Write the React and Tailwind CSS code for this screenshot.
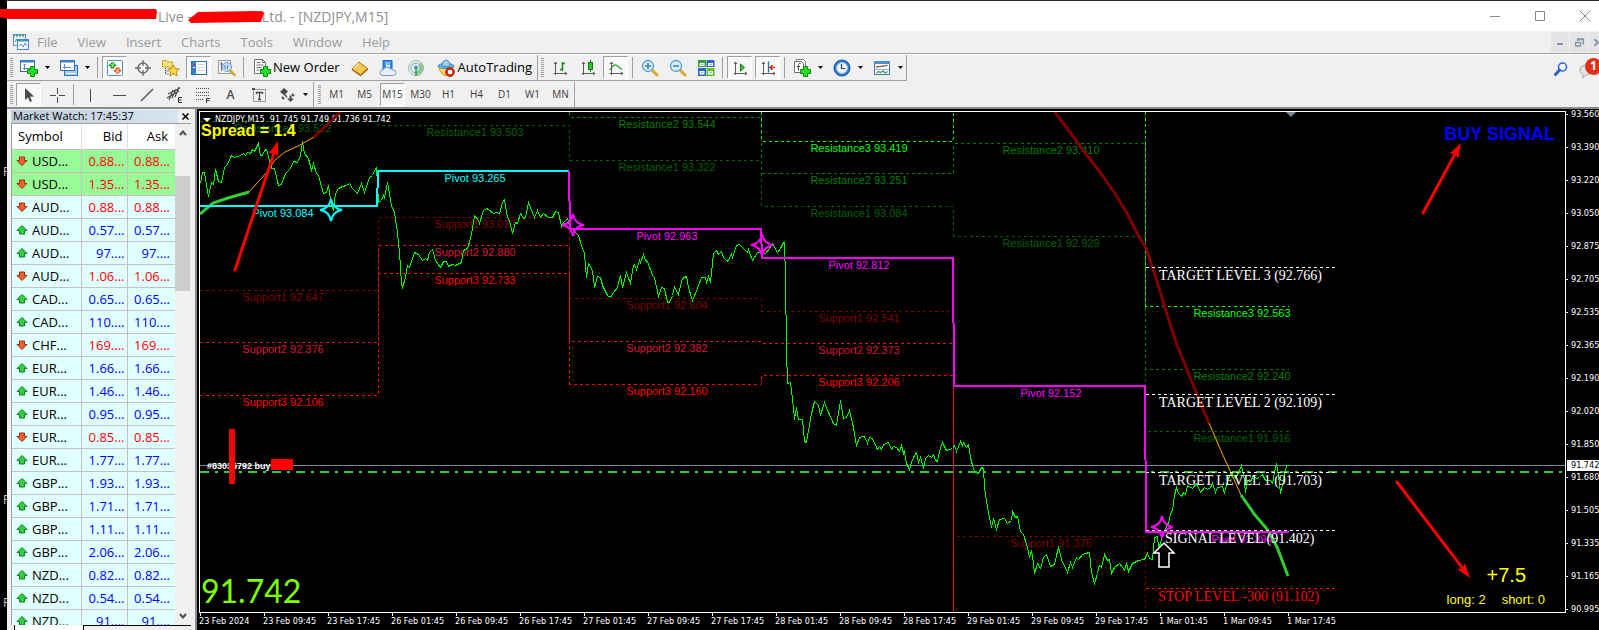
import React from 'react';
import clsx from 'clsx';

const MENUS = ['File', 'View', 'Insert', 'Charts', 'Tools', 'Window', 'Help'];
const PERIODS = ['M1', 'M5', 'M15', 'M30', 'H1', 'H4', 'D1', 'W1', 'MN'];

const QUOTES = [
  { symbol: 'USD...', price: '0.88...', up: false, hot: true },
  { symbol: 'USD...', price: '1.35...', up: false, hot: true },
  { symbol: 'AUD...', price: '0.88...', up: false },
  { symbol: 'AUD...', price: '0.57...', up: true },
  { symbol: 'AUD...', price: '97....', up: true },
  { symbol: 'AUD...', price: '1.06...', up: false },
  { symbol: 'CAD...', price: '0.65...', up: true },
  { symbol: 'CAD...', price: '110....', up: true },
  { symbol: 'CHF...', price: '169....', up: false },
  { symbol: 'EUR...', price: '1.66...', up: true },
  { symbol: 'EUR...', price: '1.46...', up: true },
  { symbol: 'EUR...', price: '0.95...', up: true },
  { symbol: 'EUR...', price: '0.85...', up: false },
  { symbol: 'EUR...', price: '1.77...', up: true },
  { symbol: 'GBP...', price: '1.93...', up: true },
  { symbol: 'GBP...', price: '1.71...', up: true },
  { symbol: 'GBP...', price: '1.11...', up: true },
  { symbol: 'GBP...', price: '2.06...', up: true },
  { symbol: 'NZD...', price: '0.82...', up: true },
  { symbol: 'NZD...', price: '0.54...', up: true },
  { symbol: 'NZD...', price: '91....', up: true },
];

const PRICES = [
  '93.560', '93.390', '93.220', '93.050', '92.875', '92.705', '92.535', '92.365',
  '92.190', '92.020', '91.850', '91.680', '91.505', '91.335', '91.165', '90.995',
];

const TIMES = [
  '23 Feb 2024', '23 Feb 09:45', '23 Feb 17:45', '26 Feb 01:45', '26 Feb 09:45', '26 Feb 17:45',
  '27 Feb 01:45', '27 Feb 09:45', '27 Feb 17:45', '28 Feb 01:45', '28 Feb 09:45', '28 Feb 17:45',
  '29 Feb 01:45', '29 Feb 09:45', '29 Feb 17:45', '1 Mar 01:45', '1 Mar 09:45', '1 Mar 17:45',
];

// One entry per trading day. Some levels run outside the visible price range.
const SESSIONS = [
  { x0: 0, x1: 177, mid: 83, R3: 94.4, R2: 93.8, R1: 93.522, P: 93.084, S1: 92.647, S2: 92.376, S3: 92.106 },
  { x0: 178, x1: 368, mid: 275, R3: 94.2, R2: 93.65, R1: 93.503, P: 93.265, S1: 93.027, S2: 92.88, S3: 92.733 },
  { x0: 370, x1: 560, mid: 467, R3: 93.9, R2: 93.544, R1: 93.322, P: 92.963, S1: 92.604, S2: 92.382, S3: 92.16 },
  { x0: 562, x1: 752, mid: 659, R3: 93.419, R2: 93.251, R1: 93.084, P: 92.812, S1: 92.541, S2: 92.373, S3: 92.206 },
  { x0: 754, x1: 944, mid: 851, R3: 94.2, R2: 93.41, R1: 92.929, P: 92.152, S1: 91.375, S2: 90.8, S3: 90.6 },
  { x0: 946, x1: 1088, mid: 1042, R3: 92.563, R2: 92.24, R1: 91.916, P: 91.394, S1: 90.9, S2: 90.6, S3: 90.4 },
];

const LEVELS = [
  { key: 'R1', name: 'Resistance1', color: '#006400' },
  { key: 'R2', name: 'Resistance2', color: '#008000' },
  { key: 'R3', name: 'Resistance3', color: '#00ff00' },
  { key: 'S1', name: 'Support1', color: '#800000' },
  { key: 'S2', name: 'Support2', color: '#dc143c' },
  { key: 'S3', name: 'Support3', color: '#ff0000' },
];

const TARGETS = [
  { text: 'TARGET LEVEL 3 (92.766)', x: 959, y: 155, color: '#ffffff' },
  { text: 'TARGET LEVEL 2 (92.109)', x: 959, y: 282, color: '#ffffff' },
  { text: 'TARGET LEVEL 1 (91.703)', x: 959, y: 360, color: '#ffffff' },
  { text: 'SIGNAL LEVEL (91.402)', x: 965, y: 418, color: '#ffffff' },
  { text: 'STOP LEVEL -300 (91.102)', x: 958, y: 476, color: '#ff0000' },
];

const CLOSE_LINE = `
0,71 2,60 4,60 8,84 11,70 13,72 15,57 18,69 21,70 24,55 27,52 31,43 34,45 40,43 43,41 45,43 47,40 50,41
52,37 54,39 58,31 60,43 62,43 64,38 66,37 69,48 71,56 74,56 78,73 81,72 85,61 90,56 93,49 97,50 100,43
102,29 104,41 108,46 111,58 113,51 116,61 118,63 123,81 126,80 128,73 131,93 133,97 135,81 138,76 142,74
146,73 149,71 152,76 157,81 161,71 164,80 167,71 169,65 172,63 174,58 176,55 178,90 181,88 183,83 184,85
187,70 188,75 191,93 194,100 197,120 199,140 201,171 202,175 205,165 207,153 209,155 212,146 214,140
218,142 222,148 225,146 227,148 229,140 232,137 235,148 240,155 243,149 246,149 248,154 252,152 255,153
261,150 263,138 267,136 270,126 272,116 274,103 278,108 279,111 283,98 286,96 288,97 293,101 296,100
299,101 302,90 304,87 307,105 309,108 312,121 315,110 317,111 320,101 323,106 325,105 328,90 332,100
334,105 337,98 340,105 343,101 348,105 352,105 355,99 358,100 361,114 363,110 367,106 370,116 373,118
378,123 382,136 384,141 386,165 388,151 392,158 394,175 397,164 400,165 402,173 407,183 410,185 413,180
417,175 420,163 422,175 426,160 430,171 433,153 434,152 436,157 439,148 440,150 443,142 445,148 447,149
452,163 454,165 458,184 461,175 464,176 467,190 469,190 472,183 474,175 478,182 482,166 486,164 488,175
492,188 497,176 501,165 505,165 506,170 508,164 510,170 513,141 516,138 518,142 521,139 523,145 527,149
531,142 532,145 536,133 539,132 543,136 547,140 548,137 552,148 557,140 562,140 565,141 569,136 572,131
577,140 580,136 583,130 584,130 585,166 586,236 587,271 590,270 592,286 594,307 596,295 598,307 602,307
604,329 606,330 608,318 611,301 614,289 618,293 620,303 624,290 628,300 633,311 636,313 638,301 640,288
643,306 646,305 649,298 653,315 656,333 659,325 662,324 664,324 667,331 669,325 672,326 677,337 679,334
681,337 683,332 688,330 691,337 693,334 696,335 699,339 701,333 703,341 704,339 706,351 709,357 711,350
713,345 716,340 718,350 720,345 723,356 725,346 728,343 731,345 733,342 735,348 737,349 740,335 742,330
746,338 752,336 754,333 756,339 760,329 762,333 763,330 766,335 768,332 770,345 772,353 774,359 778,361
781,355 783,356 784,375 787,395 791,415 793,406 796,417 799,407 804,406 807,411 811,408 812,399 815,405
817,404 820,419 823,422 827,435 829,445 831,438 833,451 834,461 837,451 840,456 843,445 846,442 850,454
854,452 856,443 858,435 862,450 865,455 867,460 870,450 872,455 876,445 878,447 882,442 885,441 889,440
891,460 894,471 897,461 899,453 901,455 904,442 907,448 909,447 911,461 914,455 919,451 922,455 924,458
926,451 928,459 932,451 938,448 944,447 947,441 949,446 952,447 954,425 957,424 958,435 960,431 962,421
965,420 966,411 968,411 970,401 972,398 974,383 976,375 978,381 981,384 983,380 985,382 987,373 992,376
996,371 1000,380 1004,375 1007,377 1010,375 1012,371 1015,380 1017,375 1022,374 1024,381 1027,368
1031,360 1035,366 1038,360 1041,353 1043,361 1045,380 1047,368 1050,369 1053,363 1056,366 1059,365
1062,362 1065,368 1070,368 1072,371 1074,360 1076,351 1078,363 1080,381 1083,368 1086,353 1088,353`;

const TREND = [
  { color: '#32cd32', w: 3, pts: '0,102 13,91 28,86 49,80' },
  { color: '#ffa500', w: 1, pts: '49,80 67,60 75,48 85,40 98,34 114,25' },
  { color: '#800000', w: 3, pts: '854,-1 867,16 883,38 902,63 914,80 927,101 938,123 946,136 955,163 965,196 977,233 988,260 1000,290 1009,311' },
  { color: '#ffa500', w: 1, pts: '1009,311 1022,341 1041,383' },
  { color: '#32cd32', w: 3, pts: '1041,383 1055,403 1067,417 1077,435 1088,464' },
];

const priceY = (p) => Math.round(93.7 + (93.084 - p) * 193.1);

/* ---------- icons ---------- */

function Svg({ size = 18, children }) {
  return (
    <svg width={size} height={size} viewBox="0 0 18 18" fill="none" aria-hidden="true" className="shrink-0">
      {children}
    </svg>
  );
}

const Plus = ({ x = 7, y = 7 }) => (
  <path
    transform={`translate(${x} ${y})`}
    d="M3.500.5h4v3h3v4h-3v3h-4v-3h-3v-4h3z"
    fill="#22e022"
    stroke="#0a8a0a"
  />
);

const Axes = () => (
  <path d="M4.500 3v13M2.500 14.500H16M3 5l1.500-2L6 5M14 13l2 1.500-2 1.500" stroke="#5c5c5c" />
);

const NewChartIcon = () => (
  <Svg>
    <rect x=".5" y="1.500" width="14" height="11" fill="#fff" stroke="#2f70b5" />
    <path d="M0 2.500h15" stroke="#3a80c8" strokeWidth="2" />
    <path d="M4.500 5v6M3 9.500h8M3.500 6l1-1 1 1" stroke="#5c86b5" />
    <Plus />
  </Svg>
);

const ProfilesIcon = () => (
  <Svg>
    <rect x="4.500" y="6.500" width="13" height="10" fill="#a9cdf0" stroke="#2f70b5" />
    <rect x=".5" y="1.500" width="14" height="10" fill="#fff" stroke="#2f70b5" />
    <path d="M0 2.500h15" stroke="#3a80c8" strokeWidth="2" />
    <path d="M4.500 5v5M3 8.500h8" stroke="#5c86b5" />
    <path d="M6 14.500h10" stroke="#e8f3ff" />
  </Svg>
);

const MarketWatchIcon = () => (
  <Svg>
    <rect x="1.500" y="1.500" width="15" height="15" rx="1" fill="#fff" stroke="#4a8fd0" />
    <path d="M6.500 3 10 6.500H8v2.500H5V6.500H3z" fill="#7be87b" stroke="#0a7d0a" />
    <path d="M11.500 15 15 11.500h-2V9h-3v2.500H8z" fill="#ffb090" stroke="#d8400c" />
  </Svg>
);

const DataWindowIcon = () => (
  <Svg>
    <circle cx="9" cy="9" r="5" stroke="#6b6b6b" strokeWidth="1.500" />
    <path d="M9 1v6M9 11v6M1 9h6M11 9h6" stroke="#6b6b6b" strokeWidth="1.300" />
  </Svg>
);

const FavoritesIcon = () => (
  <Svg>
    <path d="M.5 1.500h4l1 1.500h5v5H.5z" fill="#ffe27a" stroke="#c9a227" />
    <path d="M3.500 9v6h3M3.500 12h3" stroke="#333" strokeDasharray="1 1" />
    <path
      d="m11.500 6 1.800 3.600 4 .5-3 2.700.8 4-3.600-2-3.600 2 .8-4-3-2.700 4-.5z"
      fill="#ffd54a"
      stroke="#bd8a0c"
    />
  </Svg>
);

const NavigatorIcon = () => (
  <Svg>
    <rect x="1.500" y="2.500" width="15" height="13" fill="#fff" stroke="#2f6fb5" />
    <path d="M4 3v12" stroke="#3a7ecb" strokeWidth="4" />
    <path d="M8 5.500h6.500M8 8.500h6.500M8 11.500h6.500" stroke="#c9d5e6" />
    <path d="M3 5.500h2" stroke="#e02020" />
    <path d="M3 8.500h2" stroke="#fff" />
  </Svg>
);

const TesterIcon = () => (
  <Svg>
    <rect x=".5" y="1.500" width="12" height="13" fill="#f2f2f2" stroke="#9a9a9a" />
    <path d="M3.500 3v9M2 5h3M10 3v5" stroke="#707070" />
    <circle cx="9" cy="8" r="4.500" fill="#bfe0fb" fillOpacity=".8" stroke="#6a9fd0" />
    <path d="M7 6v4M9.500 6.500v4" stroke="#4f7ba8" />
    <path d="m12.500 11.500 4 4.500" stroke="#d8a11c" strokeWidth="2.500" strokeLinecap="round" />
  </Svg>
);

const NewOrderIcon = () => (
  <Svg>
    <path d="M1.500.5h8l3 3v11h-11z" fill="#fff" stroke="#707070" />
    <path d="M9.500.5v3h3M3.500 3.500h4M3.500 6h7M3.500 8.500h5M3.500 11h3" stroke="#707070" />
    <Plus />
  </Svg>
);

const BookIcon = () => (
  <Svg>
    <path d="M1 10 8 3l8.500 6.500L9.500 16z" fill="#f4c64a" stroke="#b5790c" />
    <path d="m1 10 8.500 6 7-6.500v1.500l-7 6-8.500-6z" fill="#c07a10" stroke="#9a5f08" strokeWidth=".6" />
    <path d="M3 9.500 8 4.500" stroke="#fff0b8" strokeWidth="1.500" />
  </Svg>
);

const CloudIcon = () => (
  <Svg>
    <path d="M4 1.500h9v9H4z" fill="#2f92ef" stroke="#1569bd" />
    <path d="M7 3.500h4v5H7z" fill="#d7ecff" />
    <path d="M8 5h3" stroke="#1569bd" />
    <path
      d="M4 16.500a3 3 0 0 1 .3-6 4 4 0 0 1 6.700-.8 3 3 0 0 1 3 1.400 2.700 2.700 0 0 1 .3 5.400z"
      fill="#eaf0f8"
      stroke="#7e95b5"
    />
  </Svg>
);

const SignalIcon = () => (
  <Svg>
    <circle cx="9" cy="9" r="7.500" fill="#e8f2ea" stroke="#9fb8b0" />
    <circle cx="9" cy="9" r="5" stroke="#7ba6c9" />
    <path d="M9 8v8.500a7.500 7.500 0 0 0 5-13z" fill="#58b558" fillOpacity=".5" />
    <circle cx="9" cy="8.500" r="2.500" fill="#4a90d9" stroke="#fff" />
    <path d="M9 9v8" stroke="#2e9a3a" strokeWidth="1.500" />
  </Svg>
);

const AutoTradingIcon = () => (
  <Svg>
    <path d="M2 8c1 5 4 8.500 7 8.500S15 13 16 8z" fill="#ffd85c" stroke="#c0901a" />
    <ellipse cx="9" cy="7" rx="8" ry="2.500" fill="#6ab8ea" stroke="#3c86bd" />
    <path d="M5 6.500c0-7 8-7 8 0-2 1.500-6 1.500-8 0z" fill="#9cd2f4" stroke="#3c86bd" />
    <circle cx="13" cy="13" r="4.500" fill="#e02a10" stroke="#a51400" strokeWidth=".7" />
    <rect x="11" y="11" width="4" height="4" fill="#fff" />
  </Svg>
);

const BarsIcon = () => (
  <Svg>
    <Axes />
    <path d="M11.500 3v9M9 10.500h2M12 4.500h2" stroke="#0c8f0c" strokeWidth="1.500" />
  </Svg>
);
const CandlesIcon = () => (
  <Svg>
    <Axes />
    <path d="M11.500 1v12" stroke="#0a6f0a" />
    <rect x="9.500" y="3.500" width="4" height="7" fill="#28c828" stroke="#0a7d0a" />
  </Svg>
);
const LineIcon = () => (
  <Svg>
    <Axes />
    <path d="M3 11c3-6 6-6 8-3.500l4 3" stroke="#2ea02e" strokeWidth="1.300" />
  </Svg>
);

const ZoomIcon = ({ plus }) => (
  <Svg>
    <path d="m11.500 11.500 4.500 4.500" stroke="#d8ac20" strokeWidth="3" strokeLinecap="round" />
    <circle cx="7" cy="7" r="5.500" fill="#d6efff" stroke="#5a9ad4" strokeWidth="1.300" />
    <path d={plus ? 'M4 7h6M7 4v6' : 'M4 7h6'} stroke="#3a80c0" strokeWidth="1.500" />
  </Svg>
);

const TileIcon = () => (
  <Svg>
    <rect x="1" y="1" width="8" height="7" fill="#2fa32f" />
    <rect x="9.500" y="1" width="8" height="7" fill="#2e62d0" />
    <rect x="1" y="9" width="8" height="8" fill="#2e62d0" />
    <rect x="9.500" y="9" width="8" height="8" fill="#58c41e" />
    <path d="M2.500 4h5v3h-5zM11 4h5v3h-5zM2.500 12h5v3.500h-5zM11 12h5v3.500h-5z" fill="#fff" />
    <path d="M3.500 5.500h3M12 5.500h3M3.500 13.500h3M12 13.500h3" stroke="#9db8e0" />
  </Svg>
);

const ScrollIcon = () => (
  <Svg>
    <Axes />
    <path d="M9.500 5v7l4-3.500z" fill="#3fcf3f" stroke="#0a7d0a" />
  </Svg>
);
const ShiftIcon = () => (
  <Svg>
    <Axes />
    <path d="M9.500 2.500v11" stroke="#1f6fae" strokeWidth="1.300" />
    <path d="M11 8.500h5M13.500 6 11 8.500l2.500 2.500" stroke="#c03a10" strokeWidth="1.500" />
  </Svg>
);

const IndicatorsIcon = () => (
  <Svg>
    <path d="M3.500.5h7l2 2v9h-9z" fill="#fff" stroke="#808080" />
    <path d="M1.500 2.500h7l2 2v9h-9z" fill="#fff" stroke="#707070" />
    <path d="M7.500 4.500c-2-1-2 1-2 3v4M4 7.500h3" stroke="#444" />
    <Plus />
  </Svg>
);

const ClockIcon = () => (
  <Svg>
    <circle cx="9" cy="9" r="8" fill="#2b7ad4" stroke="#15539c" />
    <circle cx="9" cy="9" r="5.500" fill="#eef7ff" stroke="#8dbcf0" />
    <path d="M8.500 5v4.500H12" stroke="#333" strokeWidth="1.200" />
  </Svg>
);

const TemplateIcon = () => (
  <Svg>
    <rect x="1.500" y="2.500" width="15" height="13" fill="#fff" stroke="#3a76b5" />
    <path d="M1 3.500h16" stroke="#4a90d9" strokeWidth="3" />
    <path d="M3 8.500c2-2 3 0 4.500-1s3 0 4-.500 2-1 3-.500" stroke="#a04028" strokeWidth="1.200" />
    <path d="M2 10.500h14" stroke="#8fb0d5" />
    <path d="m3.500 14 2-1.500 2 1 2.500-1.500 2.500 2 2-1.500" stroke="#2e9a3a" strokeWidth="1.200" />
  </Svg>
);

const CursorIcon = () => (
  <Svg>
    <path d="M5 2v12l3-2.500 2 4.500 2-1-2-4.300 4-.2z" fill="#4a4a4a" />
  </Svg>
);
const CrossIcon = () => (
  <Svg>
    <path d="M9.500 2v6M9.500 11v6M2 9.500h6M11 9.500h6" stroke="#4a4a4a" />
  </Svg>
);
const VLineIcon = () => (
  <Svg>
    <path d="M8.500 3v13" stroke="#4a4a4a" />
  </Svg>
);
const HLineIcon = () => (
  <Svg>
    <path d="M3 9.500h13" stroke="#4a4a4a" />
  </Svg>
);
const TrendIcon = () => (
  <Svg>
    <path d="M3 15 15 3" stroke="#4a4a4a" strokeWidth="1.200" />
  </Svg>
);
const ChannelIcon = () => (
  <Svg>
    <path d="M1 12 13 5M2 8l12-6M3 14 7 4M6 12l4-9M9 11l4-10" stroke="#4a4a4a" strokeWidth="1.200" />
    <path d="M16 11.500h-3.500v5H16M12.500 14h3" stroke="#333" />
  </Svg>
);
const FiboIcon = () => (
  <Svg>
    <path d="M2 2.500h14M2 6.500h14M2 9.500h14M2 13.500h8" stroke="#4a4a4a" strokeDasharray="1 1" />
    <path d="M16 12.500h-3.500V17M12.500 14.500h3" stroke="#333" />
  </Svg>
);
const LabelIcon = () => (
  <Svg>
    <rect x="3.500" y="3.500" width="12" height="12" stroke="#4a4a4a" strokeDasharray="1 1" />
    <path d="M6 6.500h7M9.500 6v7.500M6.500 6v2M12.500 6v2M8 13.500h3" stroke="#4a4a4a" strokeWidth="1.300" />
    <path d="M2 2h3v2H2z" fill="#4a4a4a" />
  </Svg>
);
const ArrowsIcon = () => (
  <Svg>
    <path d="M6 2l4 3.500L6.500 9 2 6z" fill="#4a4a4a" />
    <path d="m4 6 5 5" stroke="#4a4a4a" strokeWidth="1.500" />
    <path d="M9 12.500h7L12.500 16z" fill="#4a4a4a" />
    <path d="M12.500 9.500v4M4 11l2 2M14 8l2 2" stroke="#4a4a4a" strokeWidth="2" />
  </Svg>
);

const QuoteArrow = ({ up }) => (
  <svg width="12" height="12" viewBox="0 0 12 12" aria-hidden="true" className="shrink-0">
    <path
      d={up ? 'M6 1.500 11 6.500H8.500V10h-5V6.500H1z' : 'M6 10.500 1 5.500h2.500V2h5v3.500H11z'}
      fill={up ? '#2fd03f' : '#f4602c'}
      stroke={up ? '#127a1c' : '#9c2c0a'}
    />
  </svg>
);

/* ---------- toolbar parts ---------- */

function Tool({ label, pressed, children }) {
  return (
    <button
      type="button"
      aria-label={label}
      className={clsx(
        'flex h-[23px] w-[25px] shrink-0 items-center justify-center border',
        pressed ? 'border-t-[#a0a0a0] border-l-[#a0a0a0] border-r-white border-b-white bg-[#f8f8f8]' : 'border-transparent'
      )}
    >
      {children}
    </button>
  );
}

const Caret = ({ label }) => (
  <button type="button" aria-label={label} className="flex h-[23px] w-3 shrink-0 items-center justify-center">
    <svg width="5" height="3" viewBox="0 0 5 3" aria-hidden="true">
      <path d="M0 0h5L2.500 3z" fill="#000" />
    </svg>
  </button>
);

const Sep = () => <div className="mx-px h-[21px] w-px shrink-0 bg-[#a0a0a0]" />;

const Grip = () => (
  <div className="h-[20px] w-[3px] shrink-0 bg-[repeating-linear-gradient(to_bottom,#a0a0a0_0_1px,#f0f0f0_1px_2px)]" />
);

function Toolbars() {
  return (
    <div className="border-b-2 border-[#8a8a8a] bg-[#f0f0f0]">
      <div className="flex h-[27px]">
        <div className="flex h-[26px] items-center gap-[3px] border-r border-b border-[#a0a0a0] pl-[3px]">
          <Grip />
          <div className="flex">
            <Tool label="New chart"><NewChartIcon /></Tool>
            <Caret label="New chart list" />
          </div>
          <div className="flex">
            <Tool label="Profiles"><ProfilesIcon /></Tool>
            <Caret label="Profile list" />
          </div>
          <Sep />
          <Tool label="Market Watch" pressed><MarketWatchIcon /></Tool>
          <Tool label="Data Window"><DataWindowIcon /></Tool>
          <Tool label="Navigator"><FavoritesIcon /></Tool>
          <Tool label="Terminal" pressed><NavigatorIcon /></Tool>
          <Tool label="Strategy Tester"><TesterIcon /></Tool>
          <Sep />
          <button type="button" className="flex h-[23px] items-center gap-[2px] px-[5px] text-[13px] text-black">
            <NewOrderIcon />
            New Order
          </button>
          <Tool label="MetaEditor"><BookIcon /></Tool>
          <Tool label="Cloud"><CloudIcon /></Tool>
          <Tool label="Signals"><SignalIcon /></Tool>
          <button type="button" className="flex h-[23px] items-center gap-[3px] px-[5px] text-[13px] text-black">
            <AutoTradingIcon />
            AutoTrading
          </button>
        </div>
        <div className="flex h-[26px] items-center gap-[3px] border-r border-b border-[#a0a0a0] pl-[3px]">
          <Grip />
          <Tool label="Bar chart"><BarsIcon /></Tool>
          <Tool label="Candlesticks"><CandlesIcon /></Tool>
          <Tool label="Line chart" pressed><LineIcon /></Tool>
          <Sep />
          <Tool label="Zoom in"><ZoomIcon plus /></Tool>
          <Tool label="Zoom out"><ZoomIcon /></Tool>
          <Tool label="Tile windows"><TileIcon /></Tool>
          <Sep />
          <Tool label="Auto scroll" pressed><ScrollIcon /></Tool>
          <Tool label="Chart shift" pressed><ShiftIcon /></Tool>
          <Sep />
          <div className="flex">
            <Tool label="Indicators"><IndicatorsIcon /></Tool>
            <Caret label="Indicator list" />
          </div>
          <div className="flex">
            <Tool label="Periods"><ClockIcon /></Tool>
            <Caret label="Period list" />
          </div>
          <div className="flex">
            <Tool label="Templates"><TemplateIcon /></Tool>
            <Caret label="Template list" />
          </div>
        </div>
        <div className="ml-auto flex items-center gap-[11px]">
          <button type="button" aria-label="Search">
            <svg width="14" height="14" viewBox="0 0 14 14" fill="none" aria-hidden="true">
              <circle cx="8.500" cy="5" r="4" fill="#f4f8ff" stroke="#2c5fd0" strokeWidth="1.500" />
              <path d="M5.500 8 1.500 12.500" stroke="#2c5fd0" strokeWidth="3" strokeLinecap="round" />
            </svg>
          </button>
          <button type="button" aria-label="Notifications" className="relative h-[22px] w-[20px]">
            <svg width="16" height="16" viewBox="0 0 16 16" aria-hidden="true" className="mt-[6px]">
              <path d="M1 6a6 5 0 0 1 12 0c0 3-3 5-6 5l-3 3v-3.500C2 10 1 8 1 6z" fill="#e3e3ea" stroke="#a5a5a5" />
            </svg>
            <span className="absolute top-0 left-[6px] flex size-[17px] items-center justify-center rounded-full bg-[#e0301c] text-[12px] font-bold text-white">
              1
            </span>
          </button>
        </div>
      </div>
      <div className="flex h-[25px]">
        <div className="flex items-center gap-[3px] border-r border-[#a0a0a0] pr-[2px] pl-[3px]">
          <Grip />
          <Tool label="Cursor" pressed><CursorIcon /></Tool>
          <Tool label="Crosshair"><CrossIcon /></Tool>
          <Sep />
          <Tool label="Vertical line"><VLineIcon /></Tool>
          <Tool label="Horizontal line"><HLineIcon /></Tool>
          <Tool label="Trendline"><TrendIcon /></Tool>
          <Tool label="Channel"><ChannelIcon /></Tool>
          <Tool label="Fibonacci"><FiboIcon /></Tool>
          <Tool label="Text"><span className="text-[12px] font-semibold text-[#4a4a4a]">A</span></Tool>
          <Tool label="Text label"><LabelIcon /></Tool>
          <div className="flex">
            <Tool label="Arrows"><ArrowsIcon /></Tool>
            <Caret label="Arrow list" />
          </div>
        </div>
        <div className="flex items-center gap-[3px] border-r border-[#a0a0a0] pr-px pl-[4px]">
          <Grip />
          {PERIODS.map((p) => (
            <Tool key={p} label={p} pressed={p === 'M15'}>
              <span className="text-[10px] text-[#3c3c3c]">{p}</span>
            </Tool>
          ))}
        </div>
      </div>
    </div>
  );
}

/* ---------- market watch ---------- */

function MarketWatch() {
  return (
    <aside className="flex w-[190px] shrink-0 flex-col border-r-2 border-[#8a8a8a] bg-[#f0f0f0] pr-1 pl-1">
      <div className="flex h-[14px] items-center justify-between">
        <h2 className="h-[13px] w-[167px] bg-linear-to-r from-[#bfcddb] to-[#d7e4f2] pl-[2px] text-[11px] leading-[12px] text-black">
          Market Watch: 17:45:37
        </h2>
        <button type="button" aria-label="Close" className="mr-[2px]">
          <svg width="7" height="7" viewBox="0 0 7 7" aria-hidden="true">
            <path d="m.5.5 6 6m0-6-6 6" stroke="#000" strokeWidth="1.500" />
          </svg>
        </button>
      </div>
      <div className="flex min-h-0 flex-1 border-t border-l border-[#a0a0a0]">
        <div className="min-w-0 flex-1 overflow-hidden bg-white">
          <table className="w-full table-fixed border-collapse text-[13px] leading-[22px]">
            <thead>
              <tr className="h-[25px] border-b border-[#c8c0c0] bg-white">
                <th className="w-[69px] border-r border-[#e0e0e0] pl-[6px] text-left font-normal">Symbol</th>
                <th className="w-[46px] border-r border-[#e0e0e0] pr-1 text-right font-normal">Bid</th>
                <th className="pr-[7px] text-right font-normal">Ask</th>
              </tr>
            </thead>
            <tbody>
              {QUOTES.map((q, i) => (
                <tr key={i} className={clsx('h-[23px] border-b border-[#c8c0c0]', q.hot ? 'bg-[#98fb98]' : 'bg-[#e0ffff]')}>
                  <td className="border-r border-[#c8c0c0] p-0 pl-1">
                    <span className="flex items-center gap-1">
                      <QuoteArrow up={q.up} />
                      {q.symbol}
                    </span>
                  </td>
                  <td className={clsx('border-r border-[#c8c0c0] p-0 pr-[2px] text-right', q.up ? 'text-[#0000ff]' : 'text-[#ff0000]')}>
                    {q.price}
                  </td>
                  <td className={clsx('p-0 pr-[5px] text-right', q.up ? 'text-[#0000ff]' : 'text-[#ff0000]')}>{q.price}</td>
                </tr>
              ))}
            </tbody>
          </table>
        </div>
        <div className="flex w-[16px] shrink-0 flex-col items-center py-[6px]">
          <svg width="8" height="6" viewBox="0 0 8 6" fill="none" aria-hidden="true">
            <path d="m1 5 3-3.500L7 5" stroke="#505050" strokeWidth="2" />
          </svg>
          <div className="mt-10 mr-px h-[115px] w-[15px] bg-[#cdcdcd]" />
          <svg width="8" height="6" viewBox="0 0 8 6" fill="none" aria-hidden="true" className="mt-auto">
            <path d="m1 1 3 3.500L7 1" stroke="#505050" strokeWidth="2" />
          </svg>
        </div>
      </div>
      <div className="flex h-[5px]">
        <div className="ml-[3px] w-[70px] border-x border-black bg-white" />
        <div className="flex-1 border-t border-black" />
      </div>
    </aside>
  );
}

/* ---------- chart ---------- */

function Arrow({ x1, y1, x2, y2 }) {
  const len = Math.hypot(x2 - x1, y2 - y1);
  const ux = (x2 - x1) / len;
  const uy = (y2 - y1) / len;
  const bx = x2 - ux * 15;
  const by = y2 - uy * 15;
  const nx = x2 - ux * 12;
  const ny = y2 - uy * 12;
  return (
    <g>
      <line x1={x1} y1={y1} x2={nx} y2={ny} stroke="#ff0000" strokeWidth="3" strokeLinecap="round" />
      <polygon points={`${x2},${y2} ${bx - uy * 5},${by + ux * 5} ${nx},${ny} ${bx + uy * 5},${by - ux * 5}`} fill="#ff0000" />
    </g>
  );
}

const Star = ({ x, y, color }) => (
  <path
    transform={`translate(${x} ${y})`}
    d="M0-11Q1.500-1.500 11 0 1.500 1.500 0 11-1.500 1.500-11 0-1.500-1.500 0-11z"
    fill="none"
    stroke={color}
    strokeWidth="2"
  />
);

function stepPoints(key) {
  return SESSIONS.map(
    (s) => `${s.x0},${priceY(s[key]) + 0.5} ${s.x1 + 1},${priceY(s[key]) + 0.5}`
  ).join(' ');
}

function PriceChart() {
  return (
    <svg className="absolute inset-0 h-full w-full font-['Liberation_Sans']" role="img" aria-label="NZDJPY M15">
      <line x1="0" x2="100%" y1="353.5" y2="353.5" stroke="#778899" />
      <line x1="0" x2="100%" y1="360" y2="360" stroke="#32cd32" strokeWidth="2" strokeDasharray="9 6 3 6" />

      {/* support and resistance */}
      <g fill="none" strokeDasharray="3 3" shapeRendering="crispEdges">
        {LEVELS.map((l) => (
          <polyline key={l.key} points={stepPoints(l.key)} stroke={l.color} />
        ))}
      </g>
      <g fontSize="11" textAnchor="middle">
        {LEVELS.map((l) =>
          SESSIONS.filter((s) => priceY(s[l.key]) > 0 && priceY(s[l.key]) < 480).map((s) => (
            <text key={`${l.key}${s.x0}`} x={s.mid} y={priceY(s[l.key]) + 11} fill={l.color}>
              {`${l.name} ${s[l.key].toFixed(3)}`}
            </text>
          ))
        )}
        {SESSIONS.map((s, i) => (
          <text key={s.x0} x={s.mid} y={priceY(s.P) + 11} fill={i < 2 ? '#00ffff' : '#ff00ff'}>
            {`Pivot ${s.P.toFixed(3)}`}
          </text>
        ))}
      </g>

      <polyline points={CLOSE_LINE} transform="translate(.5 .5)" fill="none" stroke="#00ff00" shapeRendering="crispEdges" />
      {TREND.map((t) => (
        <polyline key={t.pts} points={t.pts} fill="none" stroke={t.color} strokeWidth={t.w} />
      ))}

      {/* pivot */}
      <g fill="none" strokeWidth="2" shapeRendering="crispEdges">
        <polyline points="0,94 177,94 178,59 369,59" stroke="#00ffff" />
        <polyline points="369,59 370,117 561,117 562,146 753,146 754,274 945,274 946,420 1089,420" stroke="#ff00ff" />
      </g>
      <Star x={131} y={98} color="#00ffff" />
      <Star x={373} y={113} color="#ff00ff" />
      <Star x={562} y={133} color="#ff00ff" />
      <Star x={962} y={415} color="#ff00ff" />

      {/* signal levels */}
      {TARGETS.map((t) => (
        <g key={t.text}>
          <line x1="946" x2="1135" y1={t.y + 0.5} y2={t.y + 0.5} stroke={t.color} strokeDasharray="3 3" />
          <text x={t.x} y={t.y + 13} fill={t.color} fontSize="14" className="font-['Liberation_Serif']">
            {t.text}
          </text>
        </g>
      ))}
      <path d="M964 431l10 10h-5v14h-10v-14h-5z" fill="#000" stroke="#fff" strokeWidth="1.500" />
      <path d="M1086 0h10l-5 5z" fill="#778899" />

      {/* chart title */}
      <path d="M3 6h8l-4 4z" fill="#fff" />
      <text x="15" y="10" fill="#fff" fontSize="9" className="font-['DejaVu_Sans_Condensed']">
        {'NZDJPY,M15\u00a0 91.745 91.749 91.736 91.742'}
      </text>
      <polyline points="114,25 128,12 141,-1" fill="none" stroke="#800000" strokeWidth="3" />
      <text x="1" y="24" fill="#ffff00" fontSize="16" fontWeight="bold">Spread = 1.4</text>

      <text x="7" y="357" fill="#fff" fontSize="9" fontWeight="bold">#83036792 buy</text>
      <rect x="29" y="317" width="6" height="55" rx="1" fill="#ff0000" />
      <rect x="71" y="347" width="22" height="11" rx="1" fill="#ff0000" />
      <text x="1" y="491" fill="#7fff00" fontSize="32" className="font-['Lato']">91.742</text>

      <Arrow x1={35} y1={158} x2={78} y2={29} />
      <Arrow x1={1223} y1={101} x2={1261} y2={31} />
      <Arrow x1={1197} y1={370} x2={1270} y2={466} />
    </svg>
  );
}

function ChartWindow() {
  return (
    <main className="flex min-w-0 flex-1 bg-black pl-[2px] font-['DejaVu_Sans_Condensed','DejaVu_Sans',sans-serif] text-[9px] leading-[11px] text-white">
      <div className="flex min-w-0 flex-1 flex-col pt-[2px]">
        <div className="relative min-h-0 flex-1 overflow-hidden border border-white">
          <PriceChart />
          <p className="absolute top-3 right-[10px] font-['Liberation_Sans'] text-[18px] leading-5 font-bold text-[#0000ff]">BUY SIGNAL</p>
          <p className="absolute right-[39px] bottom-[25px] font-['Liberation_Sans'] text-[20px] leading-6 text-[#ffff00]">+7.5</p>
          <p className="absolute right-5 bottom-1 flex gap-4 font-['Liberation_Sans'] text-[13px] leading-4 text-[#ffff00]">
            <span>long: 2</span>
            <span>short: 0</span>
          </p>
        </div>
        <div className="flex h-[17px] overflow-hidden">
          {TIMES.map((t) => (
            <div key={t} className="w-16 shrink-0 whitespace-nowrap">
              <div className="ml-px h-[3px] w-px bg-white" />
              {t}
            </div>
          ))}
        </div>
      </div>
      <div className="relative flex w-[33px] shrink-0 flex-col gap-[22px] overflow-hidden">
        {PRICES.map((p) => (
          <div key={p} className="flex items-center gap-[3px]">
            <div className="h-px w-[2px] shrink-0 bg-white" />
            {p}
          </div>
        ))}
        <div className="absolute top-[351px] right-0 left-px bg-white pl-1 text-black">91.742</div>
      </div>
    </main>
  );
}

/* ---------- window ---------- */

function TitleBar() {
  return (
    <header className="relative flex h-[31px] items-center justify-between border-t border-[#2b2b2b] bg-white">
      <h1 className="flex items-center pl-[151px] text-[14px] text-[#8f8f8f]">
        Live -
        <span className="ml-[70px]">Ltd. - [NZDJPY,M15]</span>
      </h1>
      <svg className="absolute top-2 -left-[7px]" width="270" height="16" viewBox="0 0 270 16" aria-hidden="true">
        <path d="M0 0h156l1 3-1 7H8L0 8z" fill="#ff0000" />
        <path d="M198 3l64-1 2 2-3 9-70 1-3-3z" fill="#ff0000" />
      </svg>
      <div className="flex items-center gap-[35px] pr-[9px]">
        <button type="button" aria-label="Minimize">
          <svg width="10" height="10" viewBox="0 0 10 10"><path d="M0 5.500h10" stroke="#8a8a8a" /></svg>
        </button>
        <button type="button" aria-label="Maximize">
          <svg width="10" height="10" viewBox="0 0 10 10" fill="none"><path d="M.5.5h9v9h-9z" stroke="#8a8a8a" /></svg>
        </button>
        <button type="button" aria-label="Close window">
          <svg width="10" height="10" viewBox="0 0 10 10"><path d="m0 0 10 10M10 0 0 10" stroke="#8a8a8a" /></svg>
        </button>
      </div>
    </header>
  );
}

function MenuBar() {
  return (
    <nav className="flex h-[24px] items-start border-b border-white bg-[#f0f0f0]">
      <div className="flex h-[23px] w-full items-center border-b border-[#a0a0a0] pl-[6px]">
        <svg width="16" height="18" viewBox="0 0 16 18" fill="none" aria-hidden="true">
          <rect x=".5" y="1.500" width="12" height="11" fill="#e8f2ff" stroke="#5b94dc" />
          <path d="M0 2.500h13" stroke="#3f9a6a" strokeWidth="2" strokeDasharray="2 1" />
          <path d="m2 9 2-3 2 3" stroke="#4a86d8" />
          <rect x="4.500" y="6.500" width="11" height="10" fill="#fff" stroke="#4a86d8" />
          <path d="M4 7.500h12" stroke="#4a86d8" strokeWidth="2" />
          <path d="m6 13 2-2 2 3 2-4 2 3" stroke="#4a86d8" />
        </svg>
        <div className="ml-2 flex gap-5">
          {MENUS.map((m) => (
            <button key={m} type="button" className="text-[13px] leading-5 text-[#9a9a9a]">{m}</button>
          ))}
        </div>
        <div className="ml-auto flex gap-px">
          <button type="button" aria-label="Minimize chart" className="flex h-5 w-[18px] items-center justify-center bg-[#e4e4e4]">
            <svg width="8" height="8" viewBox="0 0 8 8"><path d="M1 6h6" stroke="#8496ab" strokeWidth="2" /></svg>
          </button>
          <button type="button" aria-label="Restore chart" className="flex h-5 w-[18px] items-center justify-center bg-[#e4e4e4]">
            <svg width="9" height="9" viewBox="0 0 9 9" fill="none">
              <path d="M2.500 3V1h6v4.500H7M.5 4.500h5v3.500h-5zM2 1.500h6.500M.5 4.500h5" stroke="#8496ab" strokeWidth="1.300" />
            </svg>
          </button>
          <button type="button" aria-label="Close chart" className="flex h-5 w-[10px] items-center justify-end overflow-hidden bg-[#e4e4e4]">
            <svg width="5" height="7" viewBox="0 0 5 7"><path d="m0 0 4 3.500L0 7" stroke="#8496ab" strokeWidth="2" fill="none" /></svg>
          </button>
        </div>
      </div>
    </nav>
  );
}

export default function App() {
  return (
    <div className="flex h-screen overflow-hidden bg-black font-['Open_Sans','Noto_Sans',sans-serif]">
      {/* sliver of the desktop behind the window */}
      <div className="flex w-[7px] shrink-0 flex-col overflow-hidden pl-[3px] text-[12px] leading-4 text-[#c8c8c8]">
        <span className="mt-[164px]">F</span>
        <span className="mt-[312px]">P</span>
        <span className="mt-[87px]">F</span>
      </div>
      <div className="flex min-w-0 flex-1 flex-col">
        <TitleBar />
        <MenuBar />
        <Toolbars />
        <div className="flex min-h-0 flex-1">
          <MarketWatch />
          <ChartWindow />
        </div>
      </div>
    </div>
  );
}
